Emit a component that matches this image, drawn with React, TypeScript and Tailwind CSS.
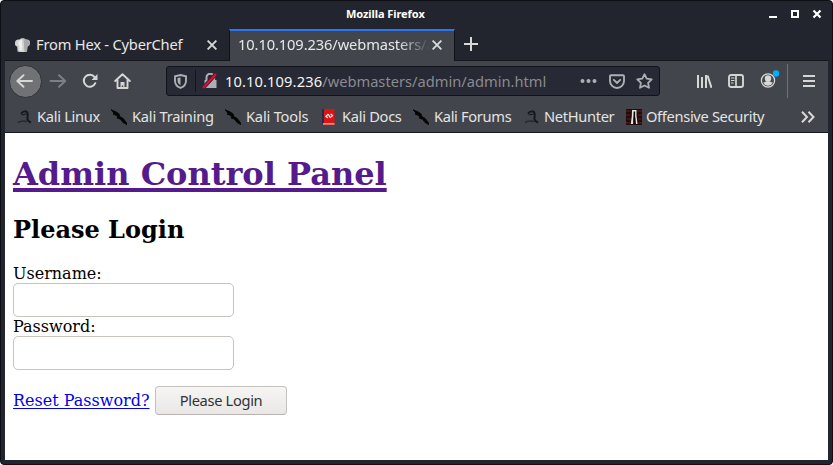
import React from "react";

const ui = "font-['Noto_Sans','Open_Sans',sans-serif]";

function Close({ className = "" }: { className?: string }) {
  return (
    <svg width="10" height="10" viewBox="0 0 10 10" className={className} fill="none" stroke="#d8d8d6" strokeWidth="1.9">
      <path d="M.6.6 9.4 9.4M9.4.6.6 9.4" />
    </svg>
  );
}

function ChefHat() {
  return (
    <svg width="16" height="16" viewBox="0 0 16 16" className="shrink-0">
      <path d="M2.600 14.400 2.200 9.600C.2 9-.3 7.300 0 5.400.5 3.200 2.300 2.300 4.100 2.700 5.100.900 9.500.500 10.800 2.500 13.300 2 15 3.300 15 5.600c.1 2-1 3.500-2.600 4l-.4 4.800c-2.500.7-6.900.7-9.400 0Z" fill="#d3d3d1" />
      <path d="M8.500 2c1 .2 1.600.4 2 1 2.300-.7 4.500.700 4.500 2.800 0 2-1 3.200-2.600 3.800l-.4 4.800-2.500.4Z" fill="#aaa" />
      <path d="M4.500 3.500c-1.500 1-1.500 3-.5 5l.8 5h2.500L7 3Z" fill="#eee" />
    </svg>
  );
}

function KaliDragon() {
  return (
    <svg width="16" height="16" viewBox="0 0 16 16" className="shrink-0">
      <path d="M4 4.800C6 1.500 9.800 1.600 10.600 4.500c.7 2.500-1 4.500.2 6.500.6 1.100 1.700 1.900 3.200 2.500" fill="none" stroke="#15171a" strokeWidth="1.900" />
      <path d="M4.500 5.500c2 .6 3.500-.5 5.500-.5" fill="none" stroke="#1d2023" strokeWidth="1.200" />
      <path d="M1 13.500c2.500-1.500 5-2 9-1" stroke="#26292d" strokeWidth="1.600" fill="none" />
    </svg>
  );
}

function KaliKnife() {
  return (
    <svg width="16" height="16" viewBox="0 0 16 16" className="shrink-0">
      <path d="M0 .5 1.800 1.600 4.500 2.500 8 4.800l1 3L12 9.300l3.500 4.500.4 2L12 13.500l-2.500-3.300L6 9l1-1.200L4.500 6 2 5.200 3 4.300Z" fill="#050505" stroke="#050505" strokeWidth=".8" />
    </svg>
  );
}

function KaliDocs() {
  return (
    <svg width="14" height="16" viewBox="0 0 14 16" className="shrink-0">
      <path d="M1 0h11.500v16H1z" fill="#dd1414" />
      <path d="M0 0h2v15H0z" fill="#242c48" />
      <path d="M1 14.300h11.500v1.200H1z" fill="#d8c8c8" />
      <path d="M6.200 5.300 3.800 7.200l2 1.600M8.600 4.900l2 1.700-2.400 2M6.300 5.200l1.900 3.600" stroke="#fff" strokeWidth="1.100" fill="none" />
    </svg>
  );
}

function Offsec() {
  return (
    <svg width="16" height="16" viewBox="0 0 16 16" className="shrink-0">
      <path d="M0 0h16v16H0z" fill="#210b0b" />
      <path d="M0 2h5M11 2h5M0 6h4M12 6h4M1 10h4M12 10h3M0 14h4M12 14h4" stroke="#4a1d1c" strokeWidth="1.400" />
      <path d="M6 1h4.500v5.500l1 8.500H10L9.200 8H7.800L7 15H4.800l1-8Z" fill="#e8e4e1" />
      <path d="M7.600 2.500h1.500V13H7.300Z" fill="#070707" />
    </svg>
  );
}

type Bookmark = { label: string; size: string; track: string; icon: React.ReactNode };

const bookmarks: Bookmark[] = [
  { label: "Kali Linux", size: "w-[94px] tracking-[-0.3px]", track: "w-[20px]", icon: <KaliDragon /> },
  { label: "Kali Training", size: "w-[114px] tracking-[-0.22px]", track: "w-[21px]", icon: <KaliKnife /> },
  { label: "Kali Tools", size: "w-[97px] tracking-[-0.2px]", track: "w-[21px]", icon: <KaliKnife /> },
  { label: "Kali Docs", size: "w-[91px] tracking-[-0.3px]", track: "w-[20px]", icon: <KaliDocs /> },
  { label: "Kali Forums", size: "w-[111px] tracking-[-0.33px]", track: "w-[21px]", icon: <KaliKnife /> },
  { label: "NetHunter", size: "w-[102px] tracking-[-0.33px]", track: "w-[20px]", icon: <KaliDragon /> },
  { label: "Offensive Security", size: "w-[145px] tracking-[-0.33px]", track: "w-[20px]", icon: <Offsec /> },
];

function TitleBar() {
  return (
    <div className="relative flex h-[28px] items-center">
      <span className="-mt-[2px] ml-[345px] text-[11px] font-bold leading-[24px] tracking-[-0.07px] text-white">Mozilla Firefox</span>
      <svg width="54" height="10" viewBox="0 0 54 10" className="absolute left-[768px] top-[8px]" fill="none" stroke="#fff">
        <path d="M0 8h8" strokeWidth="2" />
        <path d="M23 2h6v6h-6z" strokeWidth="2" />
        <path d="m44.500 1.500 7 7m0-7-7 7" strokeWidth="2.200" />
      </svg>
    </div>
  );
}

function TabBar() {
  return (
    <div className="flex h-[32px] px-[4px]">
      <div className="flex w-[224px] items-center pl-[10px]">
        <ChefHat />
        <span className="-mt-[2px] ml-[5px] w-[171px] whitespace-nowrap text-[14.67px] tracking-[-0.2px] text-[#e8e8e6]">From Hex - CyberChef</span>
        <Close />
      </div>
      <div className="flex w-[226px] items-center border-x border-t-2 border-x-[#0f1117] border-t-[#2a76f0] bg-[#42454c] pl-[8px]">
        <span className="-mt-[4px] w-[194px] whitespace-nowrap text-[14.67px] tracking-[-0.1px] text-[#e8e8e6] [mask-image:linear-gradient(to_right,#000_160px,transparent_192px)]">
          10.10.109.236/webmasters/a
        </span>
        <Close className="-mt-[2px]" />
      </div>
      <svg width="14" height="14" viewBox="0 0 14 14" className="ml-[9px] mt-[8px]">
        <path d="M0 7h14M7 0v14" stroke="#d8d8d6" strokeWidth="2" />
      </svg>
    </div>
  );
}

function NavBar() {
  return (
    <div className="flex h-[40px] items-center text-[#d6d6d4]">
      <div className="ml-[4px] flex h-[33px] w-[33px] items-center justify-center rounded-full border border-[#303238] bg-[#717276]">
        <svg width="17" height="16" viewBox="0 0 17 16" className="mr-[2px]" fill="none" stroke="currentColor" strokeWidth="1.900" strokeLinecap="round" strokeLinejoin="round">
          <path d="M16 8H1.500M7.500 2.200 1.300 8l6.200 5.800" />
        </svg>
      </div>
      <svg width="17" height="16" viewBox="0 0 17 16" className="ml-[7px]" fill="none" stroke="#7e8085" strokeWidth="1.900" strokeLinecap="round" strokeLinejoin="round">
        <path d="M1.500 8H16M10 2.200 16.200 8 10 13.800" />
      </svg>
      <svg width="16" height="16" viewBox="0 0 16 16" className="ml-[16px]" fill="none" stroke="currentColor" strokeWidth="2">
        <path d="M13.300 10.200A6 6 0 1 1 12.600 4.100L14 6" strokeLinecap="round" />
        <path d="M15.500 1v6h-6z" fill="currentColor" stroke="none" />
      </svg>
      <svg width="17" height="16" viewBox="0 0 17 16" className="ml-[16px]" fill="none" stroke="currentColor" strokeWidth="1.900" strokeLinecap="round" strokeLinejoin="round">
        <path d="M1.200 8 8.500 1.200 15.800 8M3.500 7v8h10V7" />
        <path d="M6.500 15V9h4v6h-1.200v-2.500H7.800V15z" fill="currentColor" stroke="none" />
      </svg>
      <div className="ml-[35px] flex h-[30px] w-[494px] items-center rounded-[3px] border border-[#11131a] bg-[#272934] pl-[7px] text-[#aeafb2]">
        <svg width="13" height="15" viewBox="0 0 13 15">
          <path d="M6.500 1 12 2.300v4.500c0 3.500-2 5.900-5.500 7.100C3 12.700 1 10.300 1 6.800V2.300Z" fill="none" stroke="currentColor" strokeWidth="1.900" />
          <path d="M6.500 3.500v7.700c-2-1-3-2.500-3-4.700V4.100Z" fill="currentColor" />
        </svg>
        <div className="ml-[8px] h-[22px] w-px bg-[#13151b]" />
        <svg width="17" height="16" viewBox="0 0 17 16" className="ml-[6px]">
          <path d="M4.500 7V4.500a3.800 3.800 0 0 1 7.600 0V7" fill="none" stroke="currentColor" strokeWidth="2" />
          <path d="M2.500 7h12v8H2.500z" fill="currentColor" />
          <path d="M1 15 14 1" stroke="#272934" strokeWidth="4" />
          <path d="M1 15 14 1" stroke="#fb0038" strokeWidth="1.900" />
        </svg>
        <span className="-mt-px ml-[6px] w-[356px] whitespace-nowrap text-[14.67px] text-[#8a8b91]">
          <span className="tracking-[0.12px] text-[#f5f5f5]">10.10.109.236</span>/webmasters/admin/admin.html
        </span>
        <svg width="17" height="4" viewBox="0 0 17 4" className="-ml-px" fill="currentColor">
          <circle cx="2.500" cy="2" r="2" /><circle cx="8.500" cy="2" r="2" /><circle cx="14.500" cy="2" r="2" />
        </svg>
        <svg width="16" height="15" viewBox="0 0 16 15" className="ml-[12px]" fill="none" stroke="currentColor" strokeWidth="1.900" strokeLinejoin="round" strokeLinecap="round">
          <path d="M2 1.200h12c.6 0 1 .4 1 1V7A7 7 0 0 1 1 7V2.200c0-.6.400-1 1-1ZM4.800 5.800 8 9l3.200-3.200" />
        </svg>
        <svg width="17" height="16" viewBox="0 0 17 16" className="ml-[11px]" fill="none" stroke="currentColor" strokeWidth="1.800" strokeLinejoin="round">
          <path d="m8.500 1.200 2.200 4.500 5 .7-3.600 3.500.9 4.900-4.500-2.300L4 14.800l.9-4.900L1.300 6.400l5-.7Z" />
        </svg>
      </div>
      <svg width="16" height="15" viewBox="0 0 16 15" className="ml-[36px]" fill="none" stroke="currentColor" strokeWidth="2">
        <path d="M2 1v13M6 3v11M10 1v13M11.500 1.500l4 12.300" />
      </svg>
      <svg width="16" height="14" viewBox="0 0 16 14" className="ml-[16px]" fill="none" stroke="currentColor">
        <rect x="1" y="1" width="14" height="12" rx="2" strokeWidth="1.900" />
        <path d="M8 1v12" strokeWidth="1.700" />
        <path d="M3 4h3.500M3 6.500h3.500M3 9h2.500" strokeWidth="1.200" />
      </svg>
      <svg width="20" height="20" viewBox="0 0 20 20" className="-mt-[4px] ml-[16px]">
        <circle cx="8" cy="11.500" r="6.600" fill="none" stroke="currentColor" strokeWidth="1.300" />
        <circle cx="8" cy="9.500" r="3.200" fill="currentColor" />
        <path d="M3.200 13.500c2 0 2.600-1.500 4.800-1.500s2.800 1.500 4.800 1.500c-2 4.300-7.600 4.300-9.600 0Z" fill="currentColor" />
        <circle cx="16" cy="4.500" r="3.200" fill="#00adff" />
      </svg>
      <div className="ml-[7px] h-[34px] w-px bg-[#707278]" />
      <svg width="12" height="12" viewBox="0 0 12 12" className="ml-[15px]" stroke="currentColor" strokeWidth="2">
        <path d="M0 1h12M0 6h12M0 11h12" />
      </svg>
    </div>
  );
}

function BookmarksBar() {
  return (
    <div className="flex h-[31px] items-center pl-[12px] text-[14.67px] text-[#e4e4e2]">
      {bookmarks.map((b) => (
        <div key={b.label} className={`flex shrink-0 items-center ${b.size}`}>
          <div className={`shrink-0 ${b.track}`}>{b.icon}</div>
          <span className="-mt-[2px] whitespace-nowrap">{b.label}</span>
        </div>
      ))}
      <svg width="14" height="12" viewBox="0 0 14 12" className="ml-[30px]" fill="none" stroke="#d8d8d6" strokeWidth="2">
        <path d="m1 .700 5 5.300-5 5.300M7.500.700l5 5.300-5 5.300" />
      </svg>
    </div>
  );
}

function Page() {
  return (
    <div className="h-[327px] bg-white px-[8px] font-['DejaVu_Serif',serif] text-[16px] leading-[19px] text-black">
      <h1 className="pt-[22px] text-[32px] font-bold leading-[38px] text-[#551a8b]">
        <a className="underline decoration-[4px] underline-offset-[3px]">Admin Control Panel</a>
      </h1>
      <h2 className="mt-[23px] text-[24px] font-bold leading-[28px]">Please Login</h2>
      <div className="mt-[20px]">Username:</div>
      <input className="block h-[34px] w-[221px] rounded-[5px] border border-[#c8c3be] bg-white px-2" />
      <div>Password:</div>
      <input type="password" className="block h-[34px] w-[221px] rounded-[5px] border border-[#c8c3be] bg-white px-2" />
      <div className="mt-[16px] flex">
        <a className="mt-[5px] w-[142px] whitespace-nowrap text-[#0000ee] underline decoration-[1px] underline-offset-[2px]">Reset Password?</a>
        <button className={`h-[29px] w-[132px] rounded-[4px] border border-[#c5c1bd] border-b-[#b7b2ad] bg-linear-to-b from-[#f6f5f4] to-[#e9e8e7] text-[14.67px] leading-[25px] tracking-[-0.33px] text-[#2e3436] ${ui}`}>
          Please Login
        </button>
      </div>
    </div>
  );
}

export default function App() {
  return (
    <div className={`h-[465px] w-[833px] overflow-hidden bg-white ${ui}`}>
      <div className="h-[465px] w-[833px] overflow-hidden rounded-[4px] border border-[#0d0f15] bg-[#22252e]">
        <TitleBar />
        <TabBar />
        <div className="mx-[4px] w-[823px]">
          <div className="-mt-px h-px bg-[#15171d]" />
          <div className="border-b border-[#15171d] bg-[#42454c]">
            <NavBar />
            <BookmarksBar />
          </div>
          <Page />
        </div>
      </div>
    </div>
  );
}
